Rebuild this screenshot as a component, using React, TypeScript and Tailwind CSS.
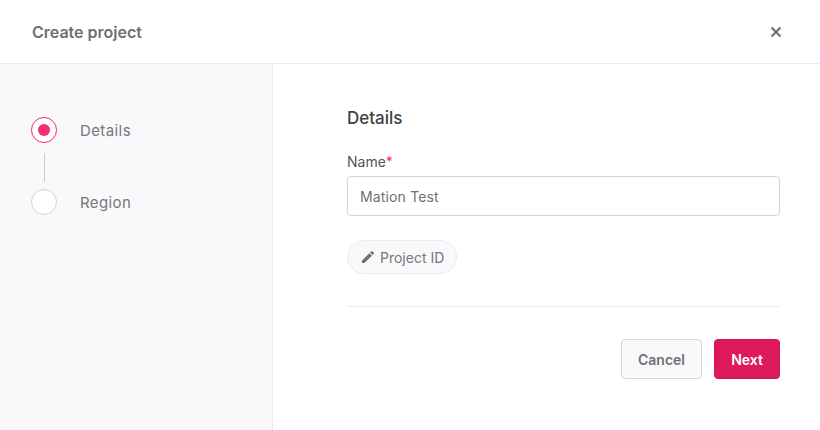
import React from 'react'

const steps = [
    { label: 'Details', active: true },
    { label: 'Region', active: false },
]

function Stepper() {
    return (
        <div className="flex flex-col">
            {steps.map((step, i) => (
                <div key={step.label}>
                    {i > 0 && <div className="mb-[7px] ml-[44px] mt-[10px] h-[29px] w-px bg-[#c9c9ce]" />}
                    <div className="flex items-center pl-[31px]">
                        <div
                            className={
                                step.active
                                    ? 'flex h-[26px] w-[26px] items-center justify-center rounded-full border border-[#f4306c] bg-white'
                                    : 'h-[26px] w-[26px] rounded-full border border-[#cfcfd3] bg-white'
                            }
                        >
                            {step.active && <div className="h-[12px] w-[12px] rounded-full bg-[#f4306c]" />}
                        </div>
                        <span className="ml-[23px] pt-px text-[15px] leading-[20px] tracking-[0.4px] text-[#76767c]">{step.label}</span>
                    </div>
                </div>
            ))}
        </div>
    )
}

export default function App() {
    return (
        <div className="flex h-[430px] w-[820px] flex-col overflow-hidden bg-white font-['Inter',sans-serif]">
            <header className="flex h-[64px] shrink-0 items-center justify-between border-b border-[#ececef] pl-[32px] pr-[38px]">
                <h1 className="pt-px text-[16px] font-semibold text-[#6f6f75]">Create project</h1>
                <button className="text-[#6f6f75]" aria-label="Close">
                    <svg width="12" height="12" viewBox="0 0 12 12" fill="none" stroke="currentColor" strokeWidth="2.2">
                        <path d="M1.5 1.5l9 9M10.5 1.5l-9 9" />
                    </svg>
                </button>
            </header>
            <div className="flex min-h-0 flex-1">
                <aside className="w-[273px] shrink-0 border-r border-[#ececef] bg-[#f9f9fb] pt-[53px]">
                    <Stepper />
                </aside>
                <main className="flex-1 pl-[74px] pr-[40px] pt-[43px]">
                    <h2 className="text-[17px] font-medium leading-[22px] text-[#3f3f45]">Details</h2>
                    <label className="mt-[23px] block text-[14px] leading-[20px] text-[#55555b]">
                        Name<span className="text-[#f4306c]">*</span>
                    </label>
                    <input
                        readOnly
                        value="Mation Test"
                        className="mt-[4px] block h-[40px] w-full rounded-[4px] border border-[#d4d4d8] bg-white px-[12px] text-[14px] tracking-[0.15px] text-[#6f6f75] outline-none"
                    />
                    <button className="mt-[24px] flex h-[34px] items-center gap-[4px] rounded-full border border-[#ececef] bg-[#f9f9fb] pl-[12px] pr-[12px] text-[14px] text-[#76767c]">
                        <svg width="16" height="16" viewBox="0 0 24 24" fill="#6f6f75">
                            <path d="M3 17.25V21h3.75L17.81 9.94l-3.75-3.75L3 17.25zM20.71 7.04a1 1 0 0 0 0-1.41l-2.34-2.34a1 1 0 0 0-1.41 0l-1.83 1.83 3.75 3.75 1.83-1.83z" />
                        </svg>
                        Project ID
                    </button>
                    <div className="mt-[32px] border-t border-[#ececef]" />
                    <div className="mt-[32px] flex justify-end gap-[12px]">
                        <button className="h-[40px] w-[81px] rounded-[4px] border border-[#d8d8dc] bg-[#f9f9fb] text-[14px] font-semibold text-[#6f6f75]">
                            Cancel
                        </button>
                        <button className="h-[40px] w-[66px] rounded-[4px] border border-[#c9164f] bg-[#dd1a5b] text-[14px] font-semibold text-white">
                            Next
                        </button>
                    </div>
                </main>
            </div>
        </div>
    )
}
